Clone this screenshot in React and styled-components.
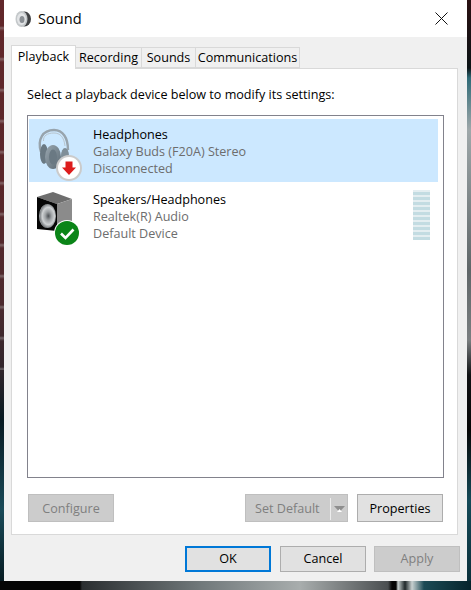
import React from 'react';
import styled, { createGlobalStyle } from 'styled-components';

const Global = createGlobalStyle`
  html, body {
    margin: 0;
    padding: 0;
  }
  body {
    font-family: "Open Sans", "Noto Sans", sans-serif;
    font-size: 12.6px;
    color: #000;
  }
`;

const Desktop = styled.div`
  box-sizing: border-box;
  width: 471px;
  height: 590px;
  overflow: hidden;
  padding-left: 4px;
  background-color: #0a0f12;
  background-repeat: no-repeat;
  background-image:
    linear-gradient(90deg, #050505 0, #050505 80px, #2a2e30 82px, #70787a 200px, #a8adad 300px, #4a4e50 388px, #050505 392px, #050505 396px, #c8d0d0 398px, #20282a 405px, #c8d0d0 412px, #1c4a55 424px, #06242c 471px),
    linear-gradient(180deg, #2a1012 0, #0c1416 68px, #2f6a76 78px, #9fa8aa 130px, #5f6668 270px, #7a7e80 340px, #101214 375px, #060606 430px, #154a58 500px, #0a2e38 590px),
    repeating-linear-gradient(180deg, transparent 0, transparent 26px, rgba(190, 190, 190, 0.4) 28px, transparent 31px),
    linear-gradient(180deg, #62282b 0, #5a2629 180px, #4c2a2e 300px, #30252b 370px, #081a22 420px, #1a4a58 510px, #05161c 590px);
  background-size: 100% 9px, 4px 581px, 4px 370px, 4px 581px;
  background-position: 0 581px, 467px 0, 0 0, 0 0;
`;

const Window = styled.div`
  width: 463px;
  height: 581px;
  background: #f0f0f0;
  display: flex;
  flex-direction: column;
`;

const TitleBar = styled.div`
  height: 37px;
  flex: none;
  background: #fff;
  display: flex;
  align-items: center;
  padding: 0 19px 0 10px;
`;

const TitleText = styled.span`
  font-size: 14.6px;
  margin-left: 6px;
  flex: 1;
  padding-bottom: 1px;
`;

const Content = styled.div`
  padding: 8px 9px 0 7px;
  display: flex;
  flex-direction: column;
`;

const Tabs = styled.div`
  display: flex;
  align-items: flex-end;
  height: 23px;
`;

const Tab = styled.div`
  position: relative;
  box-sizing: border-box;
  height: ${p => (p.$active ? '24px' : '21px')};
  width: ${p => p.$w}px;
  margin-bottom: ${p => (p.$active ? '-1px' : '0')};
  padding: ${p => (p.$active ? '0 0 2px' : '1px 0 0')};
  background: ${p => (p.$active ? '#fff' : '#f0f0f0')};
  border: 1px solid #d9d9d9;
  border-bottom: ${p => (p.$active ? 'none' : '1px solid #d9d9d9')};
  border-left: ${p => (p.$active ? '1px solid #d9d9d9' : 'none')};
  display: flex;
  align-items: center;
  justify-content: center;
  line-height: 18px;
  white-space: nowrap;
`;

const Panel = styled.div`
  box-sizing: border-box;
  height: 467px;
  width: 447px;
  background: #fff;
  border: 1px solid #d9d9d9;
  padding: 0 14px 0 15px;
  display: flex;
  flex-direction: column;
`;

const Prompt = styled.div`
  height: 46px;
  flex: none;
  line-height: 18px;
  padding: 17px 0 0 0;
  box-sizing: border-box;
`;

const DeviceList = styled.div`
  box-sizing: border-box;
  height: 363px;
  width: 417px;
  border: 1px solid #82828c;
  padding: 3px 5px 0 1px;
  display: flex;
  flex-direction: column;
  gap: 2px;
`;

const Row = styled.div`
  height: 63px;
  flex: none;
  display: flex;
  background: ${p => (p.$selected ? '#cce8ff' : 'transparent')};
`;

const DeviceIcon = styled.svg`
  width: 60px;
  height: 63px;
  flex: none;
`;

const DeviceText = styled.div`
  margin-left: 4px;
  padding-top: 7px;
  flex: 1;
  display: flex;
  flex-direction: column;
`;

const Name = styled.div`
  line-height: 17px;
`;

const Detail = styled.div`
  line-height: 17px;
  color: #6d6d6d;
`;

const Meter = styled.div`
  width: 17px;
  height: 50px;
  margin: 6px 8px 0 0;
  display: flex;
  flex-direction: column;
`;

const MeterBar = styled.div`
  height: 5px;
  flex: none;
  box-sizing: border-box;
  background: #c3dce2;
  border-top: 2px solid #e4eef1;
`;

const ButtonRow = styled.div`
  display: flex;
  margin-top: 16px;
  padding-left: 1px;
`;

const Button = styled.div`
  box-sizing: border-box;
  width: ${p => p.$w || 86}px;
  height: ${p => p.$h || 28}px;
  flex: none;
  display: flex;
  align-items: center;
  justify-content: center;
  padding-top: 1px;
  line-height: 18px;
  background: ${p => (p.$disabled ? '#cccccc' : '#e1e1e1')};
  color: ${p => (p.$disabled ? '#7f7f7f' : '#000')};
  border: ${p => (p.$default ? '2px solid #0078d7' : p.$disabled ? '1px solid #bfbfbf' : '1px solid #adadad')};
`;

const SplitButton = styled(Button)`
  margin-left: auto;
  margin-right: 9px;
  justify-content: flex-start;
  padding-left: 9px;
`;

const SplitLabel = styled.span`
  width: 75px;
`;

const SplitDivider = styled.span`
  width: 1px;
  height: 22px;
  background: #ececec;
`;

const Caret = styled.svg`
  width: 11px;
  height: 7px;
  margin-left: 3px;
  margin-top: 2px;
`;

const Footer = styled.div`
  display: flex;
  justify-content: flex-end;
  gap: 8px;
  margin: 11px -2px 0 0;
`;

const FooterButton = styled(Button)`
  padding: 0 0 1px;
  margin-right: ${p => (p.$default ? '1px' : '0')};
`;

const SpeakerGlyph = () => (
  <svg width="18" height="18" viewBox="0 0 18 18">
    <ellipse cx="10.5" cy="9" rx="6.5" ry="7.5" fill="#3f4143" />
    <ellipse cx="7.5" cy="9" rx="6" ry="8" fill="#c4c8ca" />
    <ellipse cx="7.5" cy="9" rx="4.5" ry="6" fill="#e2e4e6" />
    <ellipse cx="8" cy="9.5" rx="2.5" ry="3.5" fill="#8a8f94" />
  </svg>
);

const CloseGlyph = () => (
  <svg width="13" height="13" viewBox="0 0 13 13">
    <path d="M0.5 0.5L12.5 12.5M12.5 0.5L0.5 12.5" stroke="#111" strokeWidth="1" fill="none" />
  </svg>
);

const HeadphonesIcon = () => (
  <DeviceIcon viewBox="0 0 60 63">
    <defs>
      <linearGradient id="cup" x1="0" y1="0" x2="1" y2="1">
        <stop offset="0" stopColor="#9aa7b0" />
        <stop offset="1" stopColor="#5b6a74" />
      </linearGradient>
    </defs>
    <path d="M12 33C8 20 14 11 25 11C34 11 39 19 39 31" fill="none" stroke="#98a4ad" strokeWidth="2.4" />
    <path d="M14.5 22C14 17 18 14 25 14C31 14 35 18 36 27" fill="none" stroke="#b8c4cd" strokeWidth="1" />
    <ellipse cx="15" cy="35" rx="4" ry="10" fill="#6a7983" />
    <ellipse cx="24" cy="38" rx="8" ry="12" fill="url(#cup)" />
    <ellipse cx="24" cy="38" rx="4" ry="7.5" fill="#6a7983" />
    <ellipse cx="36" cy="37" rx="4" ry="8" fill="#7f8e98" />
    <circle cx="40" cy="49" r="13" fill="#cbcbcb" />
    <circle cx="40" cy="49" r="11" fill="#fff" />
    <path d="M36.5 42.5H43.5V48.5H47L40 56L33 48.5H36.5Z" fill="#dd1c1c" />
  </DeviceIcon>
);

const SpeakerIcon = () => (
  <DeviceIcon viewBox="0 0 60 63">
    <defs>
      <radialGradient id="cone" cx="0.55" cy="0.5" r="0.6">
        <stop offset="0" stopColor="#4e5256" />
        <stop offset="0.3" stopColor="#9da1a4" />
        <stop offset="0.6" stopColor="#cfd2d4" />
        <stop offset="0.82" stopColor="#808487" />
        <stop offset="1" stopColor="#e8eaeb" />
      </radialGradient>
    </defs>
    <path d="M8 13L24 8L43 15L28 20Z" fill="#6e6e6e" />
    <path d="M28 20L43 15V41L28 47Z" fill="#8b8b8b" />
    <path d="M8 13L28 20V47L8 45Z" fill="#060606" />
    <ellipse cx="18.5" cy="32" rx="8.5" ry="12" fill="url(#cone)" />
    <circle cx="38" cy="49" r="13" fill="#fff" />
    <circle cx="38" cy="49" r="12" fill="#0b8518" />
    <path d="M32 49.5L36.5 54L44.5 45.5" fill="none" stroke="#fff" strokeWidth="2.6" />
  </DeviceIcon>
);

const meterBars = Array.from({ length: 10 }, (_, i) => i);

export default function App() {
  return (
    <Desktop>
      <Global />
      <Window>
        <TitleBar>
          <SpeakerGlyph />
          <TitleText>Sound</TitleText>
          <CloseGlyph />
        </TitleBar>
        <Content>
          <Tabs>
            <Tab $active $w={65}>Playback</Tab>
            <Tab $w={66}>Recording</Tab>
            <Tab $w={54}>Sounds</Tab>
            <Tab $w={104}>Communications</Tab>
          </Tabs>
          <Panel>
            <Prompt>Select a playback device below to modify its settings:</Prompt>
            <DeviceList>
              <Row $selected>
                <HeadphonesIcon />
                <DeviceText>
                  <Name>Headphones</Name>
                  <Detail>Galaxy Buds (F20A) Stereo</Detail>
                  <Detail>Disconnected</Detail>
                </DeviceText>
              </Row>
              <Row>
                <SpeakerIcon />
                <DeviceText>
                  <Name>Speakers/Headphones</Name>
                  <Detail>Realtek(R) Audio</Detail>
                  <Detail>Default Device</Detail>
                </DeviceText>
                <Meter>
                  {meterBars.map(i => <MeterBar key={i} />)}
                </Meter>
              </Row>
            </DeviceList>
            <ButtonRow>
              <Button $disabled>Configure</Button>
              <SplitButton $disabled $w={103}>
                <SplitLabel>Set Default</SplitLabel>
                <SplitDivider />
                <Caret viewBox="0 0 11 7">
                  <path d="M0 0H11L5.5 6Z" fill="#8e8e8e" />
                  <path d="M3 6H8L5.5 3Z" fill="#fff" />
                </Caret>
              </SplitButton>
              <Button>Properties</Button>
            </ButtonRow>
          </Panel>
          <Footer>
            <FooterButton $default $h={26}>OK</FooterButton>
            <FooterButton $h={26}>Cancel</FooterButton>
            <FooterButton $disabled $h={26}>Apply</FooterButton>
          </Footer>
        </Content>
      </Window>
    </Desktop>
  );
}
